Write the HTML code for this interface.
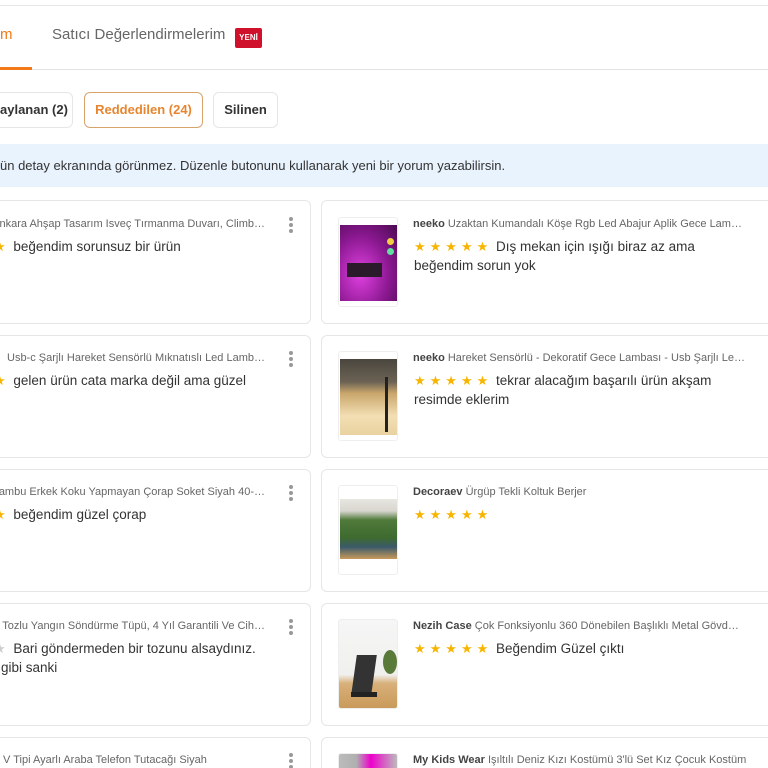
<!DOCTYPE html>
<html style="overflow:hidden;height:768px"><head><meta charset="utf-8"><style>
*{margin:0;padding:0;box-sizing:border-box}
body{width:768px;height:768px;overflow:hidden;background:#fff;font-family:"Liberation Sans",sans-serif;position:relative;color:#333}
.a{position:absolute;white-space:nowrap}
.card{position:absolute;border:1px solid #e6e6e6;border-radius:6px;background:#fff}
.t{position:absolute;font-size:11px;color:#666;white-space:nowrap}
.t b{color:#444;font-weight:bold}
.r{position:absolute;font-size:13.5px;color:#333;line-height:19px;white-space:nowrap}
.st{color:#f7b500;font-size:13px;letter-spacing:4px}
.dots{position:absolute;width:4px}
.dots i{display:block;width:4px;height:4px;border-radius:2px;background:#999;margin-bottom:2px}
.img{position:absolute;left:338px;width:60px;height:90px;border:1px solid #eee;border-radius:3px;overflow:hidden;background:#fff}
</style></head><body>
<div class="a" style="left:0;top:5px;width:768px;height:1px;background:#e8e8e8"></div>
<div class="a" style="left:0;top:26px;font-size:15px;color:#f27a1a">m</div>
<div class="a" style="left:52px;top:26px;font-size:15px;color:#666">Satıcı Değerlendirmelerim</div>
<div class="a" style="left:235px;top:28px;width:27px;height:20px;background:#d0112b;border-radius:2px;color:#fff;font-size:8px;font-weight:bold;text-align:center;line-height:20px">YENİ</div>
<div class="a" style="left:0;top:69px;width:768px;height:1px;background:#e2e2e2"></div>
<div class="a" style="left:0;top:67px;width:32px;height:3px;background:#f27a1a"></div>

<div class="a" style="left:-12px;top:92px;width:85px;height:36px;border:1px solid #e6e6e6;border-radius:6px"></div>
<div class="a" style="left:0;top:102px;font-size:13px;font-weight:bold;color:#333">aylanan (2)</div>
<div class="a" style="left:84px;top:92px;width:119px;height:36px;border:1px solid #d9a36c;border-radius:6px;font-size:13px;font-weight:bold;color:#e8862f;text-align:center;line-height:34px">Reddedilen (24)</div>
<div class="a" style="left:213px;top:92px;width:65px;height:36px;border:1px solid #e6e6e6;border-radius:6px;font-size:13px;font-weight:bold;color:#333;text-align:center;line-height:34px">Silinen</div>

<div class="a" style="left:0;top:144px;width:768px;height:43px;background:#e9f3fd"></div>
<div class="a" style="left:0;top:158px;font-size:13px;color:#333">ün detay ekranında görünmez. Düzenle butonunu kullanarak yeni bir yorum yazabilirsin.</div>

<!-- left cards -->
<div class="card" style="left:-10px;top:200px;width:321px;height:124px"></div>
<div class="t" style="right:503px;top:218px">nkara Ahşap Tasarım Isveç Tırmanma Duvarı, Climb…</div>
<div class="r" style="left:-6px;top:237px"><span class="st">★</span> beğendim sorunsuz bir ürün</div>
<div class="dots" style="left:289px;top:217px"><i></i><i></i><i></i></div>

<div class="card" style="left:-10px;top:335px;width:321px;height:123px"></div>
<div class="t" style="right:503px;top:352px">Usb-c Şarjlı Hareket Sensörlü Mıknatıslı Led Lamb…</div>
<div class="r" style="left:-6px;top:371px"><span class="st">★</span> gelen ürün cata marka değil ama güzel</div>
<div class="dots" style="left:289px;top:351px"><i></i><i></i><i></i></div>

<div class="card" style="left:-10px;top:469px;width:321px;height:123px"></div>
<div class="t" style="right:503px;top:486px">ambu Erkek Koku Yapmayan Çorap Soket Siyah 40-…</div>
<div class="r" style="left:-6px;top:505px"><span class="st">★</span> beğendim güzel çorap</div>
<div class="dots" style="left:289px;top:485px"><i></i><i></i><i></i></div>

<div class="card" style="left:-10px;top:603px;width:321px;height:123px"></div>
<div class="t" style="right:503px;top:620px">Tozlu Yangın Söndürme Tüpü, 4 Yıl Garantili Ve Cih…</div>
<div class="r" style="left:-6px;top:639px"><span class="st" style="color:#ccc">★</span> Bari göndermeden bir tozunu alsaydınız.<br><span style="margin-left:7px">gibi sanki</span></div>
<div class="dots" style="left:289px;top:619px"><i></i><i></i><i></i></div>

<div class="card" style="left:-10px;top:737px;width:321px;height:40px"></div>
<div class="t" style="left:3px;top:754px">V Tipi Ayarlı Araba Telefon Tutacağı Siyah</div>
<div class="dots" style="left:289px;top:753px"><i></i><i></i><i></i></div>

<!-- right cards -->
<div class="card" style="left:321px;top:200px;width:460px;height:124px"></div>
<div class="img" style="top:217px"><div style="position:absolute;left:1px;top:7px;width:58px;height:76px;background:radial-gradient(ellipse at 35% 65%,#e040e0,#8a1890 55%,#4a0a50)"></div><div style="position:absolute;left:8px;top:45px;width:35px;height:14px;background:#2a1a2a"></div><div style="position:absolute;left:48px;top:20px;width:7px;height:7px;border-radius:4px;background:#f0d040"></div><div style="position:absolute;left:48px;top:30px;width:7px;height:7px;border-radius:4px;background:#60e0a0"></div></div>
<div class="t" style="left:413px;top:218px"><b>neeko</b> Uzaktan Kumandalı Köşe Rgb Led Abajur Aplik Gece Lam…</div>
<div class="r" style="left:414px;top:237px"><span class="st">★★★★★</span> Dış mekan için ışığı biraz az ama<br>beğendim sorun yok</div>

<div class="card" style="left:321px;top:335px;width:460px;height:123px"></div>
<div class="img" style="top:351px"><div style="position:absolute;left:1px;top:7px;width:58px;height:76px;background:linear-gradient(180deg,#4a463e 0%,#6b6254 30%,#c9a66b 45%,#f3dfb4 75%,#e9d2a0 100%)"></div><div style="position:absolute;left:46px;top:25px;width:3px;height:55px;background:#222"></div></div>
<div class="t" style="left:413px;top:352px"><b>neeko</b> Hareket Sensörlü - Dekoratif Gece Lambası - Usb Şarjlı Le…</div>
<div class="r" style="left:414px;top:371px"><span class="st">★★★★★</span> tekrar alacağım başarılı ürün akşam<br>resimde eklerim</div>

<div class="card" style="left:321px;top:469px;width:460px;height:123px"></div>
<div class="img" style="top:485px"><div style="position:absolute;left:1px;top:13px;width:58px;height:60px;background:linear-gradient(180deg,#e8e6e0 0%,#d8d6cf 20%,#4f7a3a 35%,#3f6a30 65%,#3a5a6a 80%,#c99a5a 100%)"></div></div>
<div class="t" style="left:413px;top:486px"><b>Decoraev</b> Ürgüp Tekli Koltuk Berjer</div>
<div class="r" style="left:414px;top:505px"><span class="st">★★★★★</span></div>

<div class="card" style="left:321px;top:603px;width:460px;height:123px"></div>
<div class="img" style="top:619px;background:linear-gradient(180deg,#f6f6f6 0%,#f0f0ee 62%,#d8b07a 72%,#c99a5a 100%)"><div style="position:absolute;left:15px;top:35px;width:20px;height:40px;background:#333;transform:skewX(-8deg)"></div><div style="position:absolute;left:12px;top:72px;width:26px;height:5px;background:#222"></div><div style="position:absolute;left:44px;top:30px;width:14px;height:24px;border-radius:50%;background:#5a7a3a"></div></div>
<div class="t" style="left:413px;top:620px"><b>Nezih Case</b> Çok Fonksiyonlu 360 Dönebilen Başlıklı Metal Gövd…</div>
<div class="r" style="left:414px;top:639px"><span class="st">★★★★★</span> Beğendim Güzel çıktı</div>

<div class="card" style="left:321px;top:737px;width:460px;height:40px"></div>
<div class="img" style="top:753px;height:20px;background:linear-gradient(90deg,#bbb,#b0b0b0 30%,#e0c 55%,#bbb)"></div>
<div class="t" style="left:413px;top:754px"><b>My Kids Wear</b> Işıltılı Deniz Kızı Kostümü 3'lü Set Kız Çocuk Kostüm</div>
</body></html>
